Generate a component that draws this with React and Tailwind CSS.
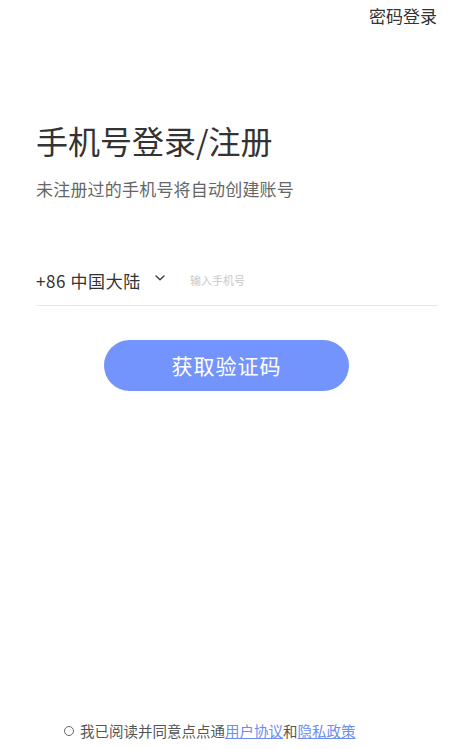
import { useState } from 'react';

const font = { fontFamily: '"Noto Sans CJK SC", "Noto Sans", sans-serif' };

export default function App() {
  const [agreed, setAgreed] = useState(false);

  return (
    <div className="w-[453px] h-[749px] bg-white flex flex-col relative" style={font}>
      {/* Top bar */}
      <div className="flex justify-end pr-4 pt-[3px]">
        <span className="text-[17px] leading-[26px] text-[#333]">密码登录</span>
      </div>

      {/* Heading */}
      <div className="px-9 mt-[89px]">
        <h1 className="text-[32px] leading-[44px] text-[#333]">手机号登录/注册</h1>
        <p className="text-[17px] leading-[24px] text-[#666] mt-[15px] tracking-[0.2px]">未注册过的手机号将自动创建账号</p>
      </div>

      {/* Phone input */}
      <div className="ml-9 mr-4 mt-[58px] border-b border-[#e8e8e8] h-[47px] flex items-start pt-[11px]">
        <div className="h-[20px] overflow-hidden flex items-start">
          <span className="text-[17px] leading-[24px] text-[#333] -mt-[1px] tracking-[0.6px]">+86 中国大陆</span>
        </div>
        <svg className="ml-[14px] mt-[5px]" width="10" height="6" viewBox="0 0 10 6" fill="none">
          <path d="M1 1l4 3.8L9 1" stroke="#444" strokeWidth="1.5" strokeLinecap="round" strokeLinejoin="round" />
        </svg>
        <input
          className="ml-[25px] flex-1 outline-none text-[11px] leading-[16px] text-[#333] placeholder:text-[#c8c8c8] mt-[2px]"
          style={font}
          placeholder="输入手机号"
        />
      </div>

      {/* Button */}
      <div className="flex justify-center mt-[34px]">
        <button className="w-[245px] h-[51px] rounded-full bg-[#7494fd] text-white text-[21px] tracking-[1px]" style={font}>
          获取验证码
        </button>
      </div>

      <div className="flex-1" />

      {/* Agreement */}
      <div className="flex items-center pl-[64px] pb-[8px] text-[14.5px] leading-[20px] text-[#555]">
        <button
          onClick={() => setAgreed(!agreed)}
          className={`w-[10px] h-[10px] rounded-full border border-[#666] mr-[6px] ${agreed ? 'bg-[#7494fd]' : ''}`}
        />
        <span>我已阅读并同意点点通</span>
        <span className="text-[#6b8cf0] underline">用户协议</span>
        <span>和</span>
        <span className="text-[#6b8cf0] underline">隐私政策</span>
      </div>
    </div>
  );
}
